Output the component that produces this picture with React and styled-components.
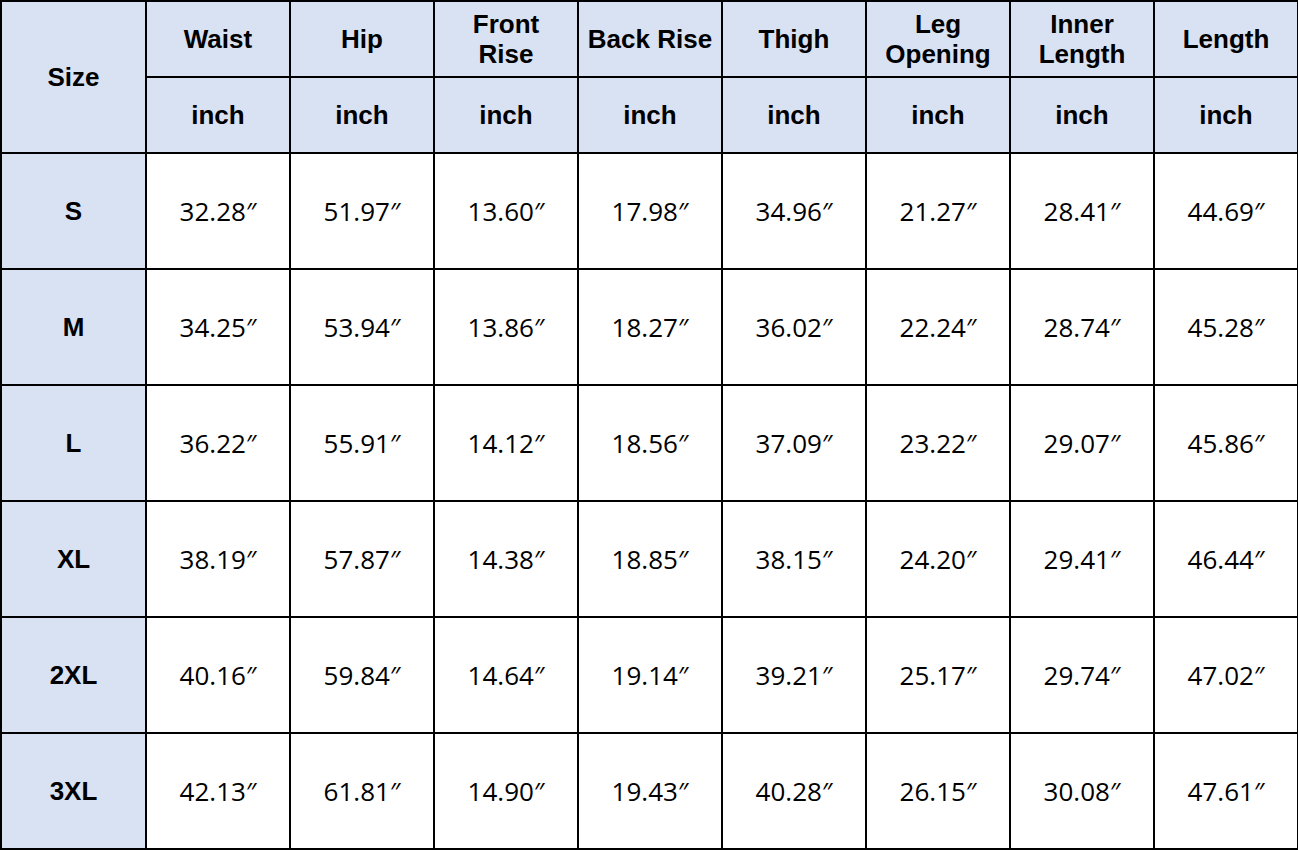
import React from 'react';
import styled, { createGlobalStyle } from 'styled-components';

const GlobalStyle = createGlobalStyle`
  html, body {
    margin: 0;
    padding: 0;
    background: #ffffff;
  }
`;

const Table = styled.table`
  width: 1298px;
  height: 850px;
  table-layout: fixed;
  border-collapse: collapse;
  color: #000;
`;

const HeadCell = styled.th`
  background: #d9e2f3;
  border: 2px solid #000;
  font-family: "Liberation Sans", Arial, sans-serif;
  font-weight: bold;
  font-size: 26px;
  line-height: 30px;
  text-align: center;
  vertical-align: middle;
  padding: 0 1px;
  height: ${(p) => p.$h || 74}px;
`;

const SizeCell = styled.th`
  background: #d9e2f3;
  border: 2px solid #000;
  font-family: "Liberation Sans", Arial, sans-serif;
  font-weight: bold;
  font-size: 26px;
  text-align: center;
  vertical-align: middle;
  padding: 0;
`;

const DataCell = styled.td`
  border: 2px solid #000;
  font-family: "Open Sans", "Noto Sans", sans-serif;
  font-size: 26px;
  text-align: center;
  vertical-align: middle;
  padding: 0;
  height: 113px;
`;

const columns = [
  ['Waist'],
  ['Hip'],
  ['Front', 'Rise'],
  ['Back Rise'],
  ['Thigh'],
  ['Leg', 'Opening'],
  ['Inner', 'Length'],
  ['Length'],
];

const rows = [
  ['S', '32.28', '51.97', '13.60', '17.98', '34.96', '21.27', '28.41', '44.69'],
  ['M', '34.25', '53.94', '13.86', '18.27', '36.02', '22.24', '28.74', '45.28'],
  ['L', '36.22', '55.91', '14.12', '18.56', '37.09', '23.22', '29.07', '45.86'],
  ['XL', '38.19', '57.87', '14.38', '18.85', '38.15', '24.20', '29.41', '46.44'],
  ['2XL', '40.16', '59.84', '14.64', '19.14', '39.21', '25.17', '29.74', '47.02'],
  ['3XL', '42.13', '61.81', '14.90', '19.43', '40.28', '26.15', '30.08', '47.61'],
];

export default function App() {
  return (
    <>
      <GlobalStyle />
      <Table>
        <colgroup>
          <col style={{ width: 145 }} />
          {columns.map((_, i) => (
            <col key={i} style={{ width: 144 }} />
          ))}
        </colgroup>
        <thead>
          <tr>
            <HeadCell rowSpan={2}>Size</HeadCell>
            {columns.map((c, i) => (
              <HeadCell key={i} $h={74}>
                {c.map((line, j) => (
                  <React.Fragment key={j}>
                    {j > 0 && <br />}
                    {line}
                  </React.Fragment>
                ))}
              </HeadCell>
            ))}
          </tr>
          <tr>
            {columns.map((_, i) => (
              <HeadCell key={i} $h={74}>inch</HeadCell>
            ))}
          </tr>
        </thead>
        <tbody>
          {rows.map((r) => (
            <tr key={r[0]}>
              <SizeCell>{r[0]}</SizeCell>
              {r.slice(1).map((v, i) => (
                <DataCell key={i}>{v}″</DataCell>
              ))}
            </tr>
          ))}
        </tbody>
      </Table>
    </>
  );
}
